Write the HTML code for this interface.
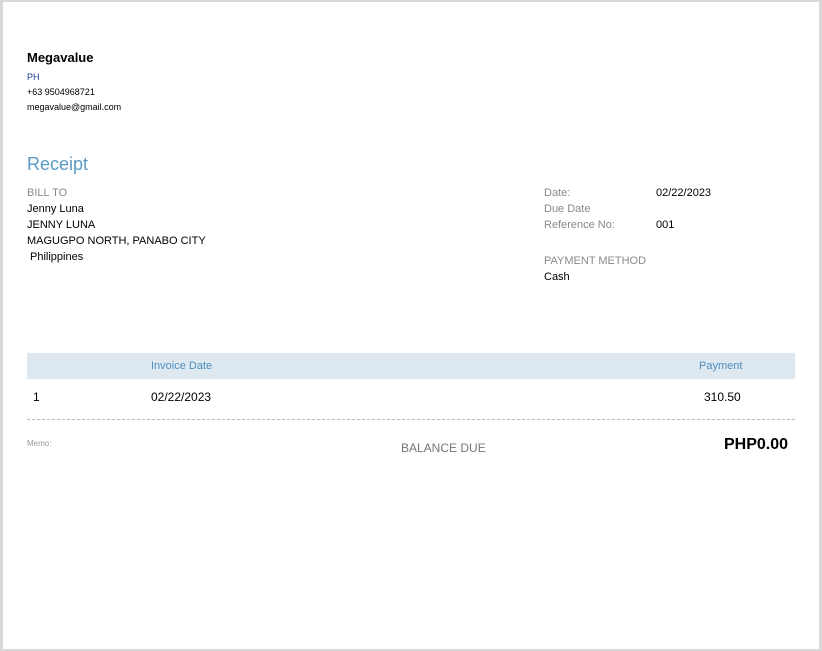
<!DOCTYPE html>
<html><head><style>
body{margin:0;width:822px;height:651px;background:#d9d9d9;font-family:"Liberation Sans",sans-serif;position:relative;overflow:hidden}
.pg{position:absolute;left:3px;top:2px;width:816px;height:647px;background:#fff}
.a{position:absolute;white-space:nowrap}
.s{font-size:9px;color:#000}
.m{font-size:11px;color:#000}
.g{font-size:11px;color:#8a8a8a}
.b{color:#4f8fbf}
</style></head><body><div class="pg"></div>
<div class="a" style="left:27px;top:50px;font-size:13px;font-weight:bold">Megavalue</div>
<div class="a s" style="left:27px;top:72px;color:#1a3d8f">PH</div>
<div class="a s" style="left:27px;top:87px">+63 9504968721</div>
<div class="a s" style="left:27px;top:102px">megavalue@gmail.com</div>
<div class="a b" style="left:27px;top:154px;font-size:18px;color:#5b9ac6">Receipt</div>
<div class="a g" style="left:27px;top:187px">BILL TO</div>
<div class="a m" style="left:27px;top:203px">Jenny Luna</div>
<div class="a m" style="left:27px;top:219px">JENNY LUNA</div>
<div class="a m" style="left:27px;top:235px">MAGUGPO NORTH, PANABO CITY</div>
<div class="a m" style="left:30px;top:251px">Philippines</div>
<div class="a g" style="left:544px;top:187px">Date:</div>
<div class="a m" style="left:656px;top:187px">02/22/2023</div>
<div class="a g" style="left:544px;top:203px">Due Date</div>
<div class="a g" style="left:544px;top:219px">Reference No:</div>
<div class="a m" style="left:656px;top:219px">001</div>
<div class="a g" style="left:544px;top:255px">PAYMENT METHOD</div>
<div class="a m" style="left:544px;top:271px">Cash</div>
<div class="a" style="left:27px;top:353px;width:768px;height:26px;background:#dde8f0"></div>
<div class="a b" style="left:151px;top:360px;font-size:11px">Invoice Date</div>
<div class="a b" style="left:699px;top:360px;font-size:11px">Payment</div>
<div class="a" style="left:33px;top:390px;font-size:12px">1</div>
<div class="a" style="left:151px;top:390px;font-size:12px">02/22/2023</div>
<div class="a" style="left:704px;top:390px;font-size:12px">310.50</div>
<div class="a" style="left:27px;top:419px;width:768px;border-top:1px dashed #bbb"></div>
<div class="a" style="left:27px;top:439px;font-size:8px;color:#999">Memo:</div>
<div class="a" style="left:401px;top:441px;font-size:12px;color:#777">BALANCE DUE</div>
<div class="a" style="left:724px;top:436px;font-size:16px;font-weight:bold">PHP0.00</div>
</body></html>
